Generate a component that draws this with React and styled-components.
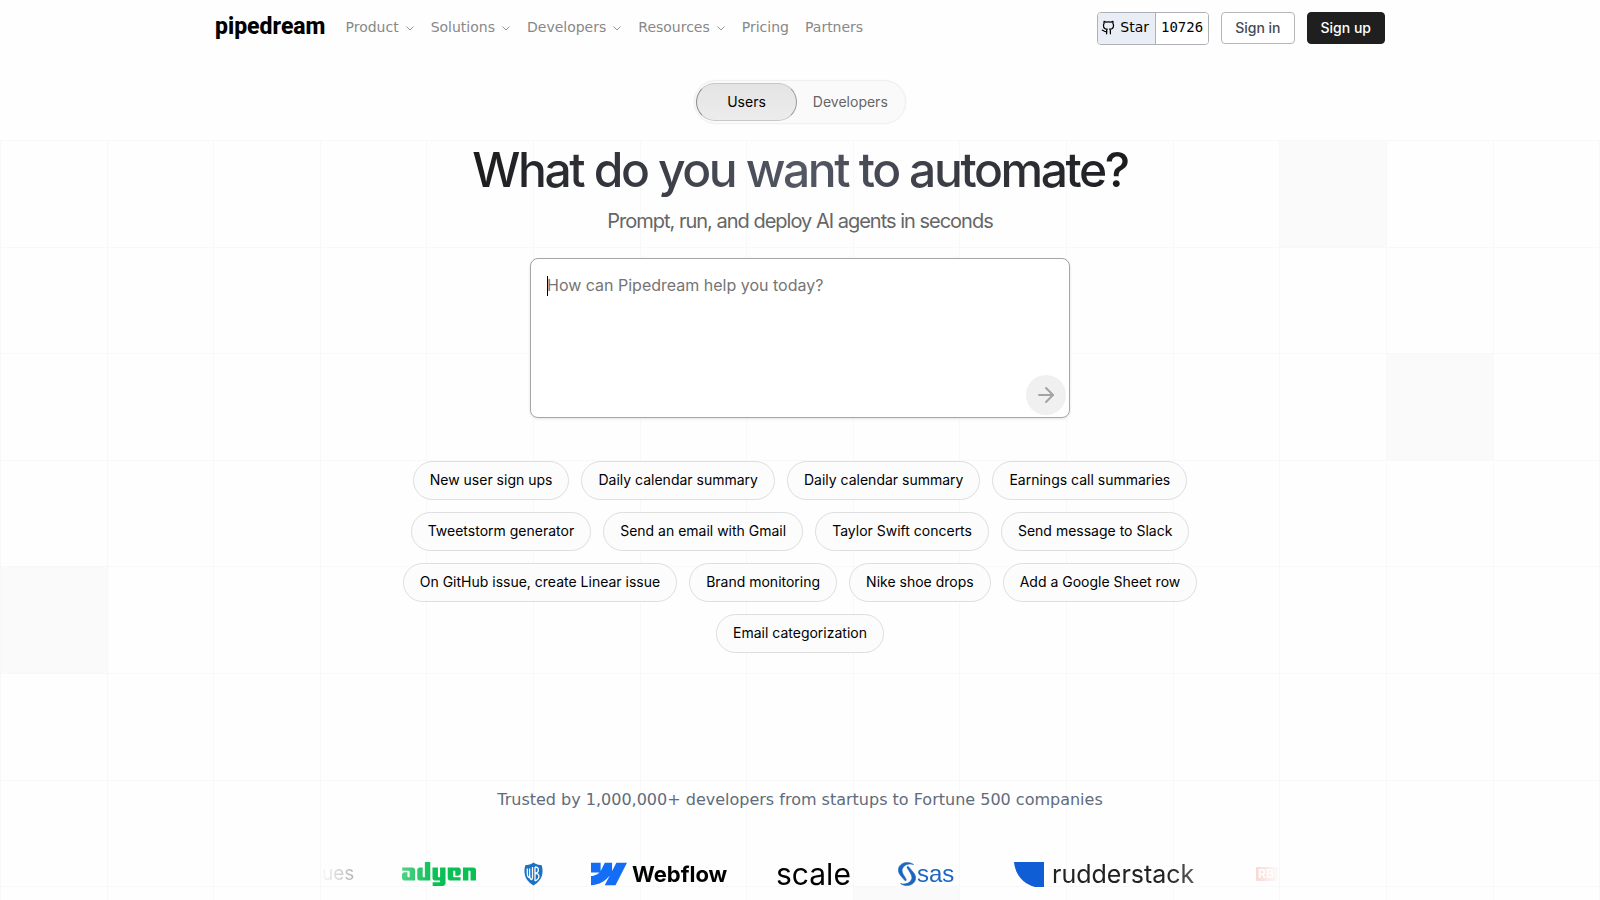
import React, { useState } from 'react';
import styled, { createGlobalStyle } from 'styled-components';
import { ArrowRight, Github } from 'lucide-react';
import { SiAdyen, SiWebflow } from 'react-icons/si';

const GlobalStyle = createGlobalStyle`
  * {
    box-sizing: border-box;
  }

  body {
    margin: 0;
    background: #fefefe;
    font-family: Inter, sans-serif;
    color: #000;
  }

  button,
  textarea {
    font-family: inherit;
  }
`;

const Page = styled.div`
  position: relative;
  min-height: 100vh;
  overflow: hidden;
`;

const Backdrop = styled.div`
  position: absolute;
  inset: 140px 0 auto;
  z-index: -1;
  display: grid;
  grid-template-columns: repeat(15, 1fr);
  border-top: 1px solid #f8f8f8;
  border-left: 1px solid #f8f8f8;
`;

const Cell = styled.div`
  aspect-ratio: 1;
  border-right: 1px solid #f8f8f8;
  border-bottom: 1px solid #f8f8f8;
  background: ${({ $filled }) => ($filled ? '#fafafa' : 'transparent')};
`;

const Header = styled.header`
  display: flex;
  align-items: center;
  justify-content: space-between;
  max-width: 1202px;
  height: 56px;
  margin: 0 auto;
  padding: 0 16px;
`;

const HeaderGroup = styled.div`
  display: flex;
  align-items: center;
  gap: ${({ $gap }) => $gap}px;
`;

const Logo = styled.a`
  padding-bottom: 2px;
  font-family: Roboto, sans-serif;
  font-size: 23px;
  font-weight: 800;
  line-height: 32px;
  color: #000;
  text-decoration: none;
`;

const Nav = styled.nav`
  display: flex;
  align-items: center;
  gap: 16px;
  padding-bottom: 2px;
`;

const NavItem = styled.a`
  display: flex;
  align-items: center;
  gap: 6px;
  font-family: 'DejaVu Sans', sans-serif;
  font-size: 14px;
  line-height: 20px;
  color: #888;
  text-decoration: none;
`;

const StarLink = styled.a`
  display: flex;
  height: 33px;
  overflow: hidden;
  border: 1px solid #adb1b5;
  border-radius: 4px;
  font-family: 'DejaVu Sans', sans-serif;
  font-size: 14px;
  line-height: 29px;
  color: #000;
  text-decoration: none;
`;

const StarLabel = styled.span`
  display: flex;
  align-items: center;
  gap: 4px;
  padding: 0 6px 2px 3px;
  border-right: 1px solid #adb1b5;
  background: #e9edf5;
`;

const StarCount = styled.span`
  padding: 0 5px;
  background: #fff;
  font-family: 'DejaVu Sans Mono', monospace;
`;

const AccountButton = styled.button`
  height: 32px;
  padding: 0 13px 2px;
  border: 1px solid ${({ $dark }) => ($dark ? '#1f1f1f' : '#b4b7ba')};
  border-radius: 4px;
  background: ${({ $dark }) => ($dark ? '#1f1f1f' : '#fff')};
  color: ${({ $dark }) => ($dark ? '#fff' : '#434a54')};
  font-size: 14px;
  font-weight: 500;
  cursor: pointer;
`;

const Hero = styled.main`
  display: flex;
  flex-direction: column;
  align-items: center;
  padding: 24px 16px 0;
`;

const Toggle = styled.div`
  display: flex;
  padding: 2px 1px;
  border: 1px solid #f0f0f0;
  border-radius: 22px;
  background: #fafafa;
  box-shadow: 0 0 2px #f2f2f2;
`;

const ToggleButton = styled.button`
  height: 38px;
  padding: 0 ${({ $active }) => ($active ? 30 : 15)}px 2px;
  border: 1px solid transparent;
  border-radius: 19px;
  background: transparent;
  color: #666;
  font-size: 14px;
  cursor: pointer;

  ${({ $active }) =>
    $active &&
    `
    border-color: #c8c8c8;
    border-left-color: #888;
    border-right-color: #999;
    background: linear-gradient(#e4e4e4, #ececec);
    color: #000;
  `}
`;

const Title = styled.h1`
  margin: 16px 0 7px;
  padding: 0 2px;
  font-size: 48px;
  font-weight: 500;
  line-height: 60px;
  letter-spacing: -0.05em;
  text-align: center;
  background: linear-gradient(90deg, #1b1b1e, #535864 50%, #1b1b1e);
  background-clip: text;
  color: transparent;
`;

const Subtitle = styled.p`
  margin: 0 0 23px;
  font-size: 20px;
  line-height: 28px;
  letter-spacing: -0.05em;
  color: #666;
  text-align: center;
`;

const PromptForm = styled.form`
  position: relative;
  width: 100%;
  max-width: 540px;
`;

const PromptInput = styled.textarea`
  display: block;
  width: 100%;
  height: 160px;
  padding: 14px 16px;
  border: 1px solid #a6a6a6;
  border-radius: 8px;
  outline: none;
  resize: none;
  background: #fff;
  box-shadow: 0 1px 3px #e4e4e4;
  font-size: 16px;
  line-height: 24px;

  &::placeholder {
    color: #757575;
  }
`;

const Caret = styled.span`
  position: absolute;
  top: 18px;
  left: 17px;
  width: 1px;
  height: 20px;
  background: #000;
`;

const SendButton = styled.button`
  position: absolute;
  right: 4px;
  bottom: 3px;
  display: flex;
  align-items: center;
  justify-content: center;
  width: 40px;
  height: 40px;
  padding: 0;
  border: 0;
  border-radius: 50%;
  background: #f0f0f0;
  color: #a3a3a3;
`;

const Suggestions = styled.div`
  display: flex;
  flex-wrap: wrap;
  justify-content: center;
  gap: 12px;
  max-width: 800px;
  margin-top: 43px;
`;

const Suggestion = styled.button`
  height: 39px;
  padding: 0 16px 2px;
  border: 1px solid #dedede;
  border-radius: 20px;
  background: #fcfcfc;
  color: #000;
  font-size: 14px;
  cursor: pointer;
`;

const Trusted = styled.section`
  width: 100%;
  max-width: 960px;
  margin-top: 135px;
`;

const TrustedText = styled.p`
  margin: 0;
  font-family: 'DejaVu Sans', sans-serif;
  font-size: 16px;
  line-height: 24px;
  color: #606b7b;
  text-align: center;
`;

const Strip = styled.div`
  display: flex;
  align-items: center;
  gap: 48px;
  height: 40px;
  margin: 42px 0 16px;
  padding-left: 2px;
  overflow: hidden;
  mask-image: linear-gradient(90deg, transparent, #000 12%, #000 88%, transparent);
`;

const Brand = styled.div`
  display: flex;
  flex: none;
  align-items: center;
  gap: ${({ $gap }) => $gap || 0}px;
  width: ${({ $width }) => $width}px;
  height: 40px;
`;

const Wordmark = styled.span`
  font-family: ${({ $font }) => $font || 'Inter'}, sans-serif;
  font-size: ${({ $size }) => $size}px;
  font-weight: ${({ $weight }) => $weight || 400};
  line-height: 40px;
  color: ${({ $color }) => $color || '#000'};
`;

const navItems = [
  { label: 'Product', menu: true },
  { label: 'Solutions', menu: true },
  { label: 'Developers', menu: true },
  { label: 'Resources', menu: true },
  { label: 'Pricing' },
  { label: 'Partners' },
];

const suggestions = [
  'New user sign ups',
  'Daily calendar summary',
  'Daily calendar summary',
  'Earnings call summaries',
  'Tweetstorm generator',
  'Send an email with Gmail',
  'Taylor Swift concerts',
  'Send message to Slack',
  'On GitHub issue, create Linear issue',
  'Brand monitoring',
  'Nike shoe drops',
  'Add a Google Sheet row',
  'Email categorization',
];

// row * 15 + column
const filledCells = [12, 43, 60, 113];

function Chevron() {
  return (
    <svg width="10" height="10" viewBox="0 0 10 10" fill="none" stroke="#999">
      <path d="M1.5 4.5 5 8l3.5-3.5" />
    </svg>
  );
}

function ShieldMark() {
  return (
    <svg width="19" height="24" viewBox="0 0 19 24" fill="none">
      <path
        d="M9.500.5C7 2.500 4 3 1.500 3 .3 6 .2 9 .7 12c.8 5 4 8.500 8.800 11.500 4.800-3 8-6.500 8.800-11.500.5-3 .4-6-.8-9-2.500 0-5.500-.5-8-2.500Z"
        fill="#1b72c4"
      />
      <path
        d="M3.300 6.500v5c0 4 2.300 5.500 2.300 1.500V6.500v6.500c0 5 2.900 6 2.900 2V5M11 5v14M11 5c4.500 0 4.500 5.500 0 6.500 5.500-.5 5 5.500 0 7.500"
        stroke="#fff"
        strokeWidth="1.300"
      />
    </svg>
  );
}

function SwirlMark() {
  return (
    <svg
      width="18"
      height="24"
      viewBox="0 0 18 24"
      fill="#1c66c0"
      stroke="#1c66c0"
      strokeWidth="0.6"
    >
      <path d="M15.500 2.500C11-.8 4.500-.2 1.500 4.200c-2.200 3.500-1 6.800 1.300 9.600l3.800 4.500c.8.9 2.200.3 1.600-.9C6.500 14 3.300 10.800 4.200 7.400 5.300 3.200 10.500.9 15.500 2.500Z" />
      <path d="M2.500 21.500c4.500 3.300 11 2.700 14-1.700 2.200-3.500 1-6.800-1.300-9.600l-4.600-5.400C9.800 3.900 8.600 4.700 9.200 5.900c1.800 3.400 5.500 7.300 4.600 10.700-1.100 4.200-6.300 6.500-11.300 4.900Z" />
    </svg>
  );
}

export default function App() {
  const [audience, setAudience] = useState('Users');

  return (
    <Page>
      <GlobalStyle />
      <Backdrop>
        {Array.from({ length: 120 }, (_, i) => (
          <Cell key={i} $filled={filledCells.includes(i)} />
        ))}
      </Backdrop>

      <Header>
        <HeaderGroup $gap={20}>
          <Logo href="#">pipedream</Logo>
          <Nav>
            {navItems.map(({ label, menu }) => (
              <NavItem key={label} href="#">
                {label}
                {menu && <Chevron />}
              </NavItem>
            ))}
          </Nav>
        </HeaderGroup>
        <HeaderGroup $gap={12}>
          <StarLink href="#">
            <StarLabel>
              <Github size={15} />
              Star
            </StarLabel>
            <StarCount>10726</StarCount>
          </StarLink>
          <AccountButton>Sign in</AccountButton>
          <AccountButton $dark>Sign up</AccountButton>
        </HeaderGroup>
      </Header>

      <Hero>
        <Toggle>
          {['Users', 'Developers'].map((name) => (
            <ToggleButton
              key={name}
              $active={audience === name}
              onClick={() => setAudience(name)}
            >
              {name}
            </ToggleButton>
          ))}
        </Toggle>

        <Title>What do you want to automate?</Title>
        <Subtitle>Prompt, run, and deploy AI agents in seconds</Subtitle>

        <PromptForm onSubmit={(e) => e.preventDefault()}>
          <PromptInput
            aria-label="Prompt"
            placeholder="How can Pipedream help you today?"
          />
          <Caret />
          <SendButton type="submit" aria-label="Send">
            <ArrowRight size={24} />
          </SendButton>
        </PromptForm>

        <Suggestions>
          {suggestions.map((text, i) => (
            <Suggestion key={i}>{text}</Suggestion>
          ))}
        </Suggestions>

        <Trusted>
          <TrustedText>
            Trusted by 1,000,000+ developers from startups to Fortune 500 companies
          </TrustedText>
          <Strip>
            <Brand $width={32}>
              <Wordmark $size={19}>ues</Wordmark>
            </Brand>
            <Brand $width={74}>
              <SiAdyen size={74} color="#0abf53" />
            </Brand>
            <Brand $width={19}>
              <ShieldMark />
            </Brand>
            <Brand $width={137} $gap={5}>
              <SiWebflow size={36} color="#146ef5" />
              <Wordmark $size={22} $weight={700}>Webflow</Wordmark>
            </Brand>
            <Brand $width={74}>
              <Wordmark $size={30}>scale</Wordmark>
            </Brand>
            <Brand $width={68} $gap={1}>
              <SwirlMark />
              <Wordmark $size={24} $font="'Liberation Sans'" $color="#1c66c0">
                sas
              </Wordmark>
            </Brand>
            <Brand $width={194} $gap={8}>
              <svg width="30" height="25" viewBox="0 0 30 25">
                <path d="M0 0h30v25h-9C9 22 1 12 0 0Z" fill="#105ed5" />
              </svg>
              <Wordmark $size={25} $color="#222">rudderstack</Wordmark>
            </Brand>
            <Brand $width={22}>
              <svg width="22" height="14" viewBox="0 0 22 14">
                <rect width="22" height="14" rx="1" fill="#e0483c" />
                <text x="2" y="11" fontFamily="Inter" fontSize="12" fontWeight="700" fill="#fff">
                  RB
                </text>
              </svg>
            </Brand>
          </Strip>
        </Trusted>
      </Hero>
    </Page>
  );
}
